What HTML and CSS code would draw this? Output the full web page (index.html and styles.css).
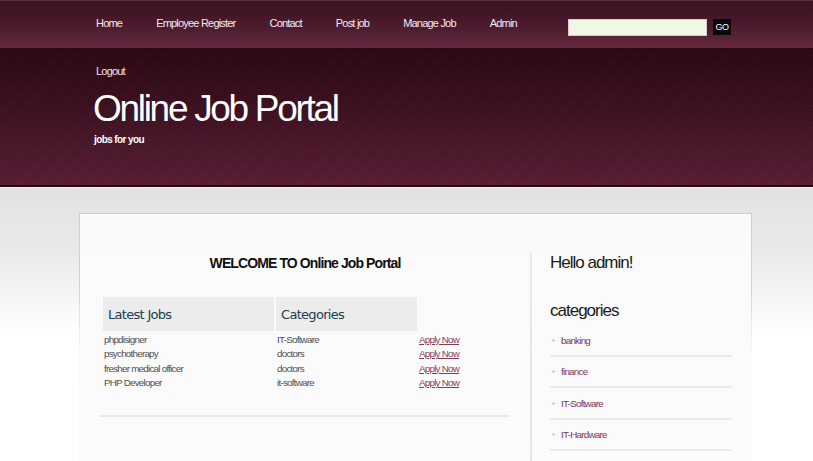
FILE: index.html
```html
<!DOCTYPE html>
<html lang="en">
<head>
<meta charset="utf-8">
<title>Online Job Portal</title>
<link rel="stylesheet" href="styles.css">
</head>
<body>
<div class="topbar">
  <ul class="nav">
    <li><a href="#">Home</a></li>
    <li><a href="#">Employee Register</a></li>
    <li><a href="#">Contact</a></li>
    <li><a href="#">Post job</a></li>
    <li><a href="#">Manage Job</a></li>
    <li><a href="#">Admin</a></li>
  </ul>
  <form class="search">
    <input class="search-input" type="text">
    <button class="search-btn" type="button">GO</button>
  </form>
</div>
<header class="masthead">
  <a class="logout" href="#">Logout</a>
  <h1 class="site-title">Online Job Portal</h1>
  <p class="tagline">jobs for you</p>
</header>
<div class="page">
  <div class="panel">
    <main class="main">
      <h2 class="welcome">WELCOME TO Online Job Portal</h2>
      <table class="jobs">
        <thead>
          <tr>
            <th class="col-job">Latest Jobs</th>
            <th class="col-cat">Categories</th>
            <th class="col-act"></th>
          </tr>
        </thead>
        <tbody>
          <tr><td>phpdisigner</td><td>IT-Software</td><td><a href="#">Apply Now</a></td></tr>
          <tr><td>psychotherapy</td><td>doctors</td><td><a href="#">Apply Now</a></td></tr>
          <tr><td>fresher medical officer</td><td>doctors</td><td><a href="#">Apply Now</a></td></tr>
          <tr><td>PHP Developer</td><td>it-software</td><td><a href="#">Apply Now</a></td></tr>
        </tbody>
      </table>
      <div class="rule"></div>
    </main>
    <aside class="sidebar">
      <h3 class="side-title">Hello admin!</h3>
      <h3 class="side-title side-cats">categories</h3>
      <ul class="cat-list">
        <li><a href="#">banking</a></li>
        <li><a href="#">finance</a></li>
        <li><a href="#">IT-Software</a></li>
        <li><a href="#">IT-Hardware</a></li>
      </ul>
    </aside>
  </div>
</div>
</body>
</html>
```
FILE: styles.css
```css
html, body {
  margin: 0;
  padding: 0;
}
body {
  background: #ffffff;
  font-family: "Liberation Sans", Arial, sans-serif;
  overflow: hidden;
}
a {
  text-decoration: none;
}

/* top navigation bar */
.topbar {
  height: 47px;
  display: flex;
  align-items: flex-start;
  padding: 0 82px 0 96px;
  border-top: 1px solid #5a3343;
  background: linear-gradient(to bottom, #3b1222 0%, #4a1a2c 50%, #65283f 100%);
}
.nav {
  display: flex;
  gap: 34px;
  list-style: none;
  margin: 0;
  padding: 16px 0 0;
}
.nav a {
  display: block;
  color: #f3e9ee;
  font-size: 11px;
  line-height: 12px;
  letter-spacing: -0.8px;
}
.search {
  margin: 18px 0 0 auto;
  display: flex;
  gap: 6px;
  align-items: flex-start;
}
.search-input {
  width: 139px;
  height: 17px;
  box-sizing: border-box;
  margin: 0;
  padding: 0 3px;
  border: 1px solid #d9ccd1;
  background: #eef8e4;
}
.search-btn {
  width: 18px;
  height: 16px;
  margin: 0;
  padding: 0;
  border: 0;
  background: #090909;
  color: #ffffff;
  font-family: "Liberation Sans", Arial, sans-serif;
  font-size: 9px;
  line-height: 16px;
  letter-spacing: -0.4px;
}

/* masthead */
.masthead {
  height: 139px;
  box-sizing: border-box;
  padding: 16px 0 0 93px;
  border-bottom: 2px solid #2a0610;
  background:
    repeating-linear-gradient(135deg, rgba(255,255,255,0.022) 0 1px, rgba(0,0,0,0) 1px 3px),
    linear-gradient(to bottom, #2a0711 0%, #3a0f1e 40%, #571c33 100%);
}
.logout {
  display: block;
  margin-left: 3px;
  color: #f1e6ea;
  font-size: 11px;
  line-height: 14px;
  letter-spacing: -0.8px;
}
.site-title {
  margin: 12px 0 0;
  color: #ffffff;
  font-weight: normal;
  font-size: 37px;
  line-height: 38px;
  letter-spacing: -2.3px;
}
.tagline {
  margin: 6px 0 0 1px;
  color: #ffffff;
  font-weight: bold;
  font-size: 10px;
  line-height: 12px;
  letter-spacing: -0.6px;
}

/* page body */
.page {
  border-top: 1px solid #f3f3f3;
  padding: 25px 61px 0 79px;
  height: 300px;
  background: linear-gradient(to bottom, #e2e2e2 0px, #e9e9e9 60px, #fbfbfb 130px, #ffffff 145px);
}
.panel {
  display: flex;
  align-items: flex-start;
  height: 320px;
  padding-top: 39px;
  border: 1px solid #cfcfcf;
  border-bottom: 0;
  border-image: linear-gradient(to bottom, #cdcdcd 0%, #d2d2d2 20%, rgba(220,220,220,0) 40%) 1;
  background: linear-gradient(to bottom, #fafafa 0%, #fbfbfb 60%, #ffffff 100%);
}
.main {
  width: 450px;
  flex: none;
}
.welcome {
  margin: 0;
  text-align: center;
  color: #111111;
  font-size: 14px;
  line-height: 20px;
  letter-spacing: -0.9px;
}
.jobs {
  margin: 24px 0 0 21px;
  border-collapse: separate;
  border-spacing: 2px 0;
}
.jobs th {
  height: 34px;
  padding: 0 0 0 5px;
  box-sizing: border-box;
  text-align: left;
  font-family: "DejaVu Sans", Verdana, sans-serif;
  font-weight: normal;
  font-size: 13px;
  letter-spacing: -0.7px;
  color: #203d4e;
  background: #ececec;
}
.jobs th.col-job {
  width: 171px;
}
.jobs th.col-cat {
  width: 141px;
}
.jobs th.col-act {
  width: 60px;
  background: transparent;
}
.jobs td {
  padding: 0 1px;
  font-size: 9.8px;
  line-height: 14.4px;
  letter-spacing: -0.75px;
  color: #505050;
}
.jobs tbody tr:first-child td {
  padding-top: 2px;
}
.jobs td:nth-child(3) {
  padding-left: 0;
  padding-right: 0;
}
.jobs td a {
  color: #8a3a60;
  text-decoration: underline;
}
.rule {
  margin: 24px 20px 0 19px;
  height: 2px;
  background: #e9e9e9;
}

/* sidebar */
.sidebar {
  flex: 1;
  min-height: 300px;
  border-left: 2px solid #e8e8e8;
  padding: 0 19px 0 18px;
}
.side-title {
  margin: 0;
  color: #1b1b1b;
  font-weight: normal;
  font-size: 17px;
  line-height: 20px;
  letter-spacing: -1px;
}
.side-cats {
  margin-top: 28px;
}
.cat-list {
  list-style: none;
  margin: 4px 0 0;
  padding: 0;
}
.cat-list li {
  display: flex;
  align-items: center;
  padding: 9.5px 0 8px;
  border-bottom: 2px solid #ebebeb;
  font-size: 9.8px;
  line-height: 12px;
  letter-spacing: -0.75px;
}
.cat-list li::before {
  content: "+";
  width: 11px;
  padding-left: 1px;
  box-sizing: border-box;
  color: #b5b5b5;
  font-size: 8px;
}
.cat-list a {
  color: #7b3556;
}
```
